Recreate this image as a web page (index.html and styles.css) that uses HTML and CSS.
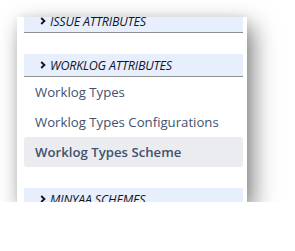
FILE: index.html
```html
<!DOCTYPE html>
<html>
<head>
<meta charset="utf-8">
<link rel="stylesheet" href="styles.css">
</head>
<body>
<div class="panel">
  <div class="scroll">
    <div class="section">
      <div class="head"><svg class="chev" viewBox="0 0 6 8" width="6" height="8"><path d="M1.2 1 L4.4 4 L1.2 7" /></svg><span class="title">Issue Attributes</span></div>
    </div>
    <div class="section">
      <div class="head"><svg class="chev" viewBox="0 0 6 8" width="6" height="8"><path d="M1.2 1 L4.4 4 L1.2 7" /></svg><span class="title">Worklog Attributes</span></div>
      <ul class="items">
        <li class="item">Worklog Types</li>
        <li class="item">Worklog Types Configurations</li>
        <li class="item active">Worklog Types Scheme</li>
      </ul>
    </div>
    <div class="section">
      <div class="head"><svg class="chev" viewBox="0 0 6 8" width="6" height="8"><path d="M1.2 1 L4.4 4 L1.2 7" /></svg><span class="title">Minyaa Schemes</span></div>
    </div>
  </div>
</div>
</body>
</html>
```
FILE: styles.css
```css
html, body {
  margin: 0;
  padding: 0;
  background: #ffffff;
}
body {
  padding: 17px 0 0 17px;
  font-family: "Open Sans", "Noto Sans", sans-serif;
}
.panel {
  width: 230px;
  height: 185px;
  background: #ffffff;
  overflow: hidden;
  box-shadow: 6px 9px 22px rgba(0, 0, 0, 0.5), 0 0 8px rgba(0, 0, 0, 0.06);
}
.scroll {
  margin-top: -7px;
  padding: 0 4px 0 7px;
  display: flex;
  flex-direction: column;
  gap: 21px;
}
.section {
  display: flex;
  flex-direction: column;
}
.head {
  height: 22px;
  background: #e7effc;
  border-bottom: 1px solid #8e8e8e;
  display: flex;
  align-items: center;
  padding-left: 16px;
  gap: 4px;
}
.chev {
  fill: none;
  stroke: #141428;
  stroke-width: 1.9;
  flex: none;
}
.title {
  font-style: italic;
  text-transform: uppercase;
  font-size: 12.5px;
  color: #141428;
  letter-spacing: -0.2px;
}
.items {
  list-style: none;
  margin: 0;
  padding: 0;
}
.item {
  height: 30px;
  display: flex;
  align-items: center;
  padding-left: 11px;
  font-size: 13.2px;
  color: #42526e;
  border-radius: 3px;
}
.item.active {
  background: #ebecf0;
  font-weight: 600;
  color: #42526e;
}
```
